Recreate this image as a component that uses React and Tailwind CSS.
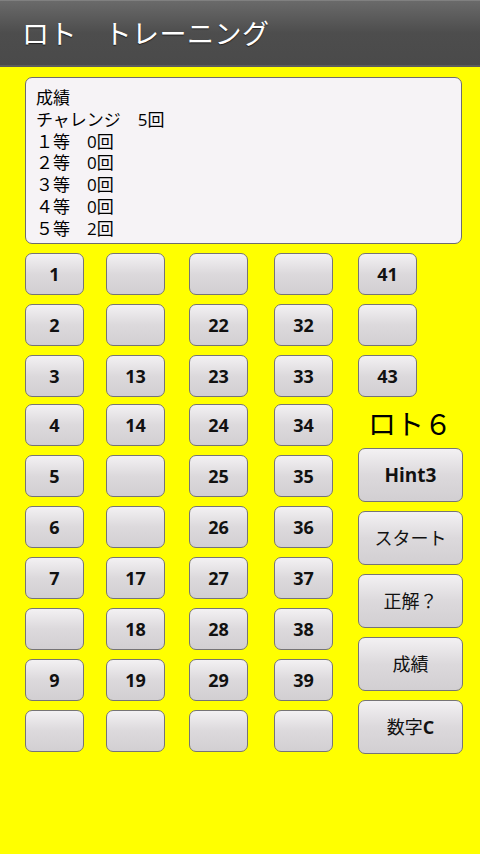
/**
 * LotoTraining - ロト トレーニング画面
 */

const columns = [
  ['1', '2', '3', '4', '5', '6', '7', '', '9', ''],
  ['', '', '13', '14', '', '', '17', '18', '19', ''],
  ['', '22', '23', '24', '25', '26', '27', '28', '29', ''],
  ['', '32', '33', '34', '35', '36', '37', '38', '39', ''],
];

const stats = [
  '成績',
  'チャレンジ　5回',
  '１等　0回',
  '２等　0回',
  '３等　0回',
  '４等　0回',
  '５等　2回',
];

const btnBase =
  'flex items-center justify-center border border-[#767476] rounded-[7px] bg-gradient-to-b from-[#f3f1f3] via-[#dcd9dc] to-[#d2cfd2] text-[#111]';

function NumButton({ label, className = '' }) {
  return (
    <div className={`${btnBase} w-[59px] h-[42px] text-[18px] font-bold ${className}`}>
      {label}
    </div>
  );
}

function WideButton({ children }) {
  return (
    <div className={`${btnBase} w-[105px] h-[54px] text-[18px]`}>
      {children}
    </div>
  );
}

export default function App() {
  const gaps = ['', 'ml-[22px]', 'ml-[24px]', 'ml-[26px]'];

  return (
    <div className="w-[480px] h-[854px] bg-[#ffff00] font-['Open_Sans','Noto_Sans_CJK_JP',sans-serif] overflow-hidden">
      {/* タイトルバー */}
      <div className="h-[67px] flex items-center pl-[22px] bg-gradient-to-b from-[#6a6a6a] via-[#4d4d4d] to-[#4a4a4a] border-t border-[#808080] border-b-2 border-b-[#5c5c5c]">
        <span className="text-white text-[27px] tracking-[0.5px] font-['Noto_Sans_CJK_JP',sans-serif] [text-shadow:0_1px_1px_rgba(0,0,0,0.6)]">
          ロト　トレーニング
        </span>
      </div>

      <div className="pl-[25px] pt-[10px]">
        {/* 成績 */}
        <div className="w-[437px] h-[167px] bg-[#f6f3f6] border border-[#6e6c6e] rounded-[7px] pl-[10px] pt-[9px] text-[17px] leading-[21.8px] text-black font-['Open_Sans','Noto_Sans_CJK_JP',sans-serif]">
          {stats.map((line) => (
            <div key={line} className="whitespace-pre">{line}</div>
          ))}
        </div>

        {/* ボタン */}
        <div className="flex mt-[9px]">
          {columns.map((col, ci) => (
            <div key={ci} className={`flex flex-col gap-[9px] ${gaps[ci]}`}>
              {col.map((n, ri) => (
                <NumButton key={ri} label={n} className={ri === 3 ? '-mt-[2px]' : ''} />
              ))}
            </div>
          ))}

          <div className="flex flex-col ml-[25px]">
            <div className="flex flex-col gap-[9px]">
              <NumButton label="41" />
              <NumButton label="" />
              <NumButton label="43" />
            </div>
            <div className="h-[51px] flex items-center pl-[10px] text-[28px] text-black font-['Noto_Sans_CJK_JP',sans-serif]">
              ロト６
            </div>
            <div className="flex flex-col gap-[9px]">
              <WideButton>
                <span className="font-bold text-[19px]">Hint3</span>
              </WideButton>
              <WideButton>スタート</WideButton>
              <WideButton>正解？</WideButton>
              <WideButton>成績</WideButton>
              <WideButton>
                数字<span className="font-bold">C</span>
              </WideButton>
            </div>
          </div>
        </div>
      </div>
    </div>
  );
}
